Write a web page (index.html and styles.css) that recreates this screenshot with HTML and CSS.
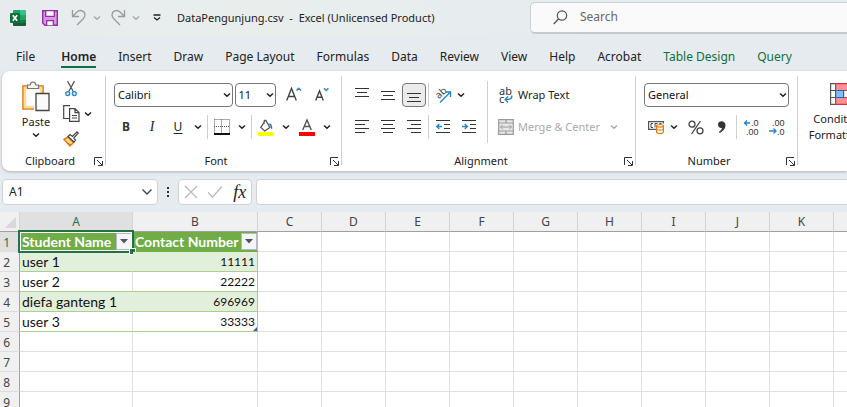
FILE: index.html
```html
<!DOCTYPE html>
<html lang="en">
<head>
<meta charset="utf-8">
<title>DataPengunjung.csv - Excel</title>
<link rel="stylesheet" href="styles.css">
</head>
<body>
<svg class="defs" aria-hidden="true">
  <symbol id="chev" viewBox="0 0 8 8"><path d="M1 2.500 4 5.300 7 2.500" fill="none" stroke="currentColor" stroke-width="1.500"/></symbol>
  <symbol id="launch" viewBox="0 0 9 9"><path d="M.5 8V.5H8M3 3l5 5M8.500 4v4.500H4" fill="none" stroke="#333"/></symbol>
</svg>

<header class="titlebar">
  <svg class="logo" width="16" height="16" viewBox="0 0 16 16" aria-hidden="true">
    <path d="M3 1a1 1 0 0 1 1-1h6v5H3z" fill="#21a366"/><path d="M10 0h5a1 1 0 0 1 1 1v4h-6z" fill="#33c481"/>
    <path d="M3 5h7v5H3z" fill="#107c41"/><path d="M10 5h6v5h-6z" fill="#21a366"/>
    <path d="M3 10h13v5a1 1 0 0 1-1 1H4a1 1 0 0 1-1-1z" fill="#185c37"/><path d="M10 10h6v3h-6z" fill="#107c41"/>
    <rect y="3" width="10" height="10" rx="1" fill="#0f7039"/>
    <path d="M2.800 5.200 7.200 10.800M7.200 5.200 2.800 10.800" stroke="#fff" stroke-width="1.700"/>
  </svg>
  <button class="qat save" aria-label="Save"><svg width="16" height="16" viewBox="0 0 16 16"><path d="M.7.700h14.600v14.600H3L.7 13z" fill="#d59ade" stroke="#962aa5" stroke-width="1.400"/><path d="M3.700.700h8.600v5.600H3.700zM4.700 15.300v-4.600h6.600v4.600" fill="#fff" stroke="#962aa5" stroke-width="1.300"/></svg></button>
  <span class="qat-split"><button class="qat" aria-label="Undo"><svg width="16" height="17" viewBox="0 0 16 17"><path d="M1.500 1v6.500H8M2 7 6 3c3-3 8-1 8 3 0 2-1 3-2 4l-6 6" fill="none" stroke="#999" stroke-width="1.300"/></svg></button><button class="drop" aria-label="Undo history"><svg width="8" height="8"><use href="#chev"/></svg></button></span>
  <span class="qat-split"><button class="qat" aria-label="Redo"><svg width="16" height="17" viewBox="0 0 16 17"><path d="M14.500 1v6.500H8M14 7l-4-4C7 0 2 2 2 6c0 2 1 3 2 4l6 6" fill="none" stroke="#999" stroke-width="1.300"/></svg></button><button class="drop" aria-label="Redo history"><svg width="8" height="8"><use href="#chev"/></svg></button></span>
  <button class="qat more" aria-label="Customize Quick Access Toolbar"><svg width="8" height="8" viewBox="0 0 8 8"><path d="M.5 1h7M1 3.500 4 6l3-2.500" fill="none" stroke="#222" stroke-width="1.300"/></svg></button>
  <h1 class="doc">DataPengunjung.csv&nbsp; -&nbsp; Excel (Unlicensed Product)</h1>
  <label class="search">
    <svg width="15" height="15" viewBox="0 0 15 15" aria-hidden="true"><circle cx="9" cy="5.500" r="4.700" fill="none" stroke="#555" stroke-width="1.200"/><path d="M5.500 9 .7 14" stroke="#555" stroke-width="1.300"/></svg>
    <input type="search" placeholder="Search" aria-label="Search">
  </label>
</header>

<nav class="tabs">
  <a href="#" class="file">File</a><a href="#" class="active">Home</a><a href="#">Insert</a><a href="#">Draw</a><a href="#">Page Layout</a><a href="#">Formulas</a><a href="#">Data</a><a href="#">Review</a><a href="#">View</a><a href="#">Help</a><a href="#">Acrobat</a><a href="#" class="ctx">Table Design</a><a href="#" class="ctx">Query</a>
</nav>

<main>
<section class="ribbon">
  <div class="group clipboard">
    <div class="body">
      <button class="paste">
        <svg width="28" height="32" viewBox="0 0 28 32" aria-hidden="true"><path d="M1 5h20v23H1z" fill="#fff" stroke="#e07b12" stroke-width="1.600"/><path d="M3 7h16v19H3z" fill="none" stroke="#fbdc96" stroke-width="2.400"/><path d="M5.500 7.500V4H8c1-4 5-4 6 0h2.500v3.500z" fill="#f6f6f6" stroke="#777" stroke-width="1.200"/><path d="M12 10.500h4v20h-4z" fill="#fff"/><path d="M14 12.500h13v17H14z" fill="#fafafa" stroke="#444" stroke-width="1.300"/></svg>
        <span>Paste</span>
        <svg width="8" height="8"><use href="#chev"/></svg>
      </button>
      <div class="clips">
        <div class="clip-row"><button class="ico" aria-label="Cut"><svg width="12" height="17" viewBox="0 0 12 17"><path d="m2.500 1 6 11M9.500 1l-6 11" stroke="#555" stroke-width="1.300"/><circle cx="2.700" cy="13.600" r="2" fill="#d8ecfa" stroke="#2487ce" stroke-width="1.300"/><circle cx="9.300" cy="13.600" r="2" fill="#d8ecfa" stroke="#2487ce" stroke-width="1.300"/></svg></button></div>
        <div class="clip-row"><button class="ico" aria-label="Copy"><svg width="17" height="17" viewBox="0 0 17 17"><path d="M6 13.500H.7V.7H7" fill="none" stroke="#444" stroke-width="1.200"/><path d="M6.600 3.600h5.400l4 4v8.700H6.600zM12 3.600v4h4M9 10.500h5M9 13h5" fill="none" stroke="#444" stroke-width="1.200"/></svg></button><button class="drop" aria-label="Copy options"><svg width="8" height="8"><use href="#chev"/></svg></button></div>
        <div class="clip-row"><button class="ico" aria-label="Format Painter"><svg width="16" height="16" viewBox="0 0 16 16"><path d="M1 8.500 5 6l5.500 5.500L7 15z" fill="#ffd98b" stroke="#e07b12" stroke-width="1.500"/><path d="M3 10.500 7 15l1.500-1.500" fill="#e07b12"/><path d="m5 5.500 2-2 2.500 2L14 .8 15.300 2 10.800 7l1.700 2-1.500 2z" fill="#fff" stroke="#444" stroke-width="1.200"/></svg></button></div>
      </div>
    </div>
    <footer><span>Clipboard</span><button class="launch" aria-label="Clipboard settings"><svg width="9" height="9"><use href="#launch"/></svg></button></footer>
  </div>

  <div class="group font">
    <div class="body stack">
      <div class="row tight">
        <span class="combo name"><select aria-label="Font"><option>Calibri</option></select><svg width="8" height="8"><use href="#chev"/></svg></span>
        <span class="combo size"><select aria-label="Font size"><option>11</option></select><svg width="8" height="8"><use href="#chev"/></svg></span>
        <button class="btn grow" aria-label="Increase font size"><svg width="16" height="16" viewBox="0 0 16 16"><path d="M.7 13.500 5.500 1.500l4.800 12M2.300 9.500h6.400" fill="none" stroke="#444" stroke-width="1.400"/><path d="m10.500 3.500 2.200-2.300L15 3.500" fill="none" stroke="#2487ce" stroke-width="1.400"/></svg></button>
        <button class="btn" aria-label="Decrease font size"><svg width="14" height="16" viewBox="0 0 14 16"><path d="M.7 13.500 4.500 4l3.800 9.500M2 10.300h5" fill="none" stroke="#444" stroke-width="1.400"/><path d="M9 1.200 11.200 3.500l2.200-2.300" fill="none" stroke="#2487ce" stroke-width="1.400"/></svg></button>
      </div>
      <div class="row styles">
        <button class="ico bold">B</button><button class="ico ital">I</button>
        <span class="split"><button class="ico under">U</button><button class="drop" aria-label="Underline options"><svg width="8" height="8"><use href="#chev"/></svg></button></span>
        <i class="sep"></i>
        <span class="split"><button class="ico" aria-label="Borders"><svg width="16" height="16" viewBox="0 0 16 16"><path d="M.5.500h15v14M.5.500v14M7.500.500v14M0 7.500h16" fill="none" stroke="#555" stroke-dasharray="1 1"/><path d="M0 14h16v2H0z" fill="#111"/></svg></button><button class="drop" aria-label="Border options"><svg width="8" height="8"><use href="#chev"/></svg></button></span>
        <i class="sep"></i>
        <span class="split"><button class="ico" aria-label="Fill color"><svg width="16" height="17" viewBox="0 0 16 17"><path d="M7 2 2.800 8.500l4 3.500 5-3.500-3-5.500C8 .5 6 .5 6 3v2" fill="#fff" stroke="#555" stroke-width="1.300"/><path d="M10.500 4.500c3-.5 4 2 3.700 6-1.500-.5-1.500-3-2-4z" fill="#2374b5"/><path d="M0 13h16v4H0z" fill="#ff0"/></svg></button><button class="drop" aria-label="Fill colors"><svg width="8" height="8"><use href="#chev"/></svg></button></span>
        <span class="split last"><button class="ico" aria-label="Font color"><svg width="16" height="17" viewBox="0 0 16 17"><path d="M3.700 11 8 1l4.300 10M5.200 7.500h5.600" fill="none" stroke="#555" stroke-width="1.400"/><path d="M0 13h16v4H0z" fill="#f00"/></svg></button><button class="drop" aria-label="Font colors"><svg width="8" height="8"><use href="#chev"/></svg></button></span>
      </div>
    </div>
    <footer><span>Font</span><button class="launch" aria-label="Font settings"><svg width="9" height="9"><use href="#launch"/></svg></button></footer>
  </div>

  <div class="group align">
    <div class="body">
      <div class="stack">
        <div class="row tight">
          <button class="btn" aria-label="Top align"><svg width="14" height="14" viewBox="0 0 14 14"><path d="M0 .500h14M2 4.500h10M0 8.500h14" stroke="#333"/></svg></button>
          <button class="btn" aria-label="Middle align"><svg width="14" height="14" viewBox="0 0 14 14"><path d="M0 3.500h14M2 7.500h10M0 11.500h14" stroke="#333"/></svg></button>
          <button class="btn on" aria-label="Bottom align"><svg width="14" height="14" viewBox="0 0 14 14"><path d="M0 5.500h14M2 9.500h10M0 13.500h14" stroke="#333"/></svg></button>
          <i class="sep"></i>
          <span class="split flush"><button class="btn" aria-label="Orientation"><svg width="18" height="18" viewBox="0 0 18 18"><text x="2" y="12" transform="rotate(-42 5 9)" font-size="10" fill="#444">ab</text><path d="M6 16.500 16 6.500M11.500 6h5v5" fill="none" stroke="#2487ce" stroke-width="1.400"/></svg></button><button class="drop" aria-label="Orientation options"><svg width="8" height="8"><use href="#chev"/></svg></button></span>
        </div>
        <div class="row tight">
          <button class="btn" aria-label="Align left"><svg width="14" height="14" viewBox="0 0 14 14"><path d="M0 .500h14M0 4.500h10M0 8.500h14M0 12.500h10" stroke="#333"/></svg></button>
          <button class="btn" aria-label="Center"><svg width="14" height="14" viewBox="0 0 14 14"><path d="M0 .500h14M2 4.500h10M0 8.500h14M2 12.500h10" stroke="#333"/></svg></button>
          <button class="btn" aria-label="Align right"><svg width="14" height="14" viewBox="0 0 14 14"><path d="M0 .500h14M4 4.500h10M0 8.500h14M4 12.500h10" stroke="#333"/></svg></button>
          <i class="sep"></i>
          <button class="btn" aria-label="Decrease indent"><svg width="14" height="14" viewBox="0 0 14 14"><path d="M0 .500h14M8 4.500h6M8 8.500h6M0 12.500h14" stroke="#333"/><path d="M6 6.500H.8M3.300 4 .8 6.500 3.300 9" fill="none" stroke="#2487ce" stroke-width="1.400"/></svg></button>
          <button class="btn" aria-label="Increase indent"><svg width="14" height="14" viewBox="0 0 14 14"><path d="M0 .500h14M8 4.500h6M8 8.500h6M0 12.500h14" stroke="#333"/><path d="M0 6.500h5.200M2.800 4l2.500 2.500L2.800 9" fill="none" stroke="#2487ce" stroke-width="1.400"/></svg></button>
        </div>
      </div>
      <i class="sep tall"></i>
      <div class="stack wide">
        <button class="text"><svg width="16" height="18" viewBox="0 0 16 18" aria-hidden="true"><text x="1" y="9" font-size="11" fill="#333">ab</text><text x="1" y="17" font-size="11" fill="#333">c</text><path d="M13.500 9.500c1 3-1 4-6 4M10 10.500l-2.800 3 2.800 3" fill="none" stroke="#2487ce" stroke-width="1.500"/></svg><span>Wrap Text</span></button>
        <button class="text off" disabled><svg width="16" height="16" viewBox="0 0 16 16" aria-hidden="true"><path d="M.7.700h14.600v14.600H.7zM.7 4h14.600M.7 12h14.600M8 .7V4M8 12v3.300" fill="#e8e8e8" stroke="#999" stroke-width="1.200"/><path d="M2.500 8h11M4.700 5.800 2.500 8l2.200 2.200M11.300 5.800 13.500 8l-2.200 2.200" fill="none" stroke="#999"/></svg><span>Merge &amp; Center</span><svg class="end" width="8" height="8"><use href="#chev"/></svg></button>
      </div>
    </div>
    <footer><span>Alignment</span><button class="launch" aria-label="Alignment settings"><svg width="9" height="9"><use href="#launch"/></svg></button></footer>
  </div>

  <div class="group number">
    <div class="body stack">
      <div class="row"><span class="combo full"><select aria-label="Number format"><option>General</option></select><svg width="8" height="8"><use href="#chev"/></svg></span></div>
      <div class="row tight">
        <span class="split flush"><button class="btn" aria-label="Accounting format"><svg width="16" height="14" viewBox="0 0 16 14"><path d="M8 9.400H.6V1.600h14.800v2" fill="#fff" stroke="#555" stroke-width="1.200"/><path d="M5 3.500H3v4h2M7 7.500v-4h2.500M11.500 4.500v-1h2" fill="none" stroke="#444"/><path d="M8.600 6v6c0 2 6.800 2 6.800 0V6z" fill="#fff" stroke="#e07b12" stroke-width="1.200"/><ellipse cx="12" cy="5.800" rx="3.400" ry="1.300" fill="#fff" stroke="#e07b12" stroke-width="1.200"/><path d="M8.600 9c1 1.500 5.800 1.500 6.800 0" fill="none" stroke="#e07b12" stroke-width="1.200"/></svg></button><button class="drop" aria-label="Accounting options"><svg width="8" height="8"><use href="#chev"/></svg></button></span>
        <button class="btn pct" aria-label="Percent style"><svg width="16" height="15" viewBox="0 0 16 15"><circle cx="4" cy="4.200" r="3" fill="none" stroke="#444" stroke-width="1.300"/><circle cx="12" cy="10.800" r="3" fill="none" stroke="#444" stroke-width="1.300"/><path d="M12.500 1 3.500 14" stroke="#444" stroke-width="1.300"/></svg></button>
        <button class="btn" aria-label="Comma style"><svg width="10" height="14" viewBox="0 0 10 14"><path d="M1 4.500C1 0 8.500 0 8.500 5c0 4-3 6.500-6 8l-.7-1c2-1.200 3-2.500 3.200-4C3 8.500 1 7 1 4.500z" fill="#333"/></svg></button>
        <i class="sep"></i>
        <button class="btn" aria-label="Increase decimal"><svg class="dec" width="17" height="18" viewBox="0 0 17 18"><text x="8" y="8">.0</text><text x="3" y="17">.00</text><path d="M7 5H1.500M4 2.500 1.500 5 4 7.500" fill="none" stroke="#2487ce" stroke-width="1.400"/></svg></button>
        <button class="btn" aria-label="Decrease decimal"><svg class="dec" width="17" height="18" viewBox="0 0 17 18"><text x="3" y="8">.00</text><text x="8" y="17">.0</text><path d="M0 13h7M4.500 10.500 7 13l-2.500 2.500" fill="none" stroke="#2487ce" stroke-width="1.400"/></svg></button>
      </div>
    </div>
    <footer><span>Number</span><button class="launch" aria-label="Number settings"><svg width="9" height="9"><use href="#launch"/></svg></button></footer>
  </div>

  <div class="group cond">
    <div class="body">
      <button class="big"><svg width="26" height="22" viewBox="0 0 26 22" aria-hidden="true"><path d="M.6.600h24.800v20.800H.6zM.6 7.500h24.800M.6 14.500h24.800" fill="#fff" stroke="#555" stroke-width="1.200"/><path d="M5.600.600h13v6.900h-13zM5.600 14.500h13v6.900h-13z" fill="#fd8f96" stroke="#d13438" stroke-width="1.200"/><path d="M5.600 7.500h8v7h-8z" fill="#83beec" stroke="#0f6cbd" stroke-width="1.200"/></svg><span>Conditional<br>Formatting <svg class="inline" width="8" height="8"><use href="#chev"/></svg></span></button>
    </div>
  </div>
</section>

<section class="formula">
  <div class="namebox"><input value="A1" aria-label="Name box"><button aria-label="Names"><svg width="12" height="8" viewBox="0 0 12 8"><path d="m1.500 1.500 4.500 4.500 4.500-4.500" fill="none" stroke="#444" stroke-width="1.400"/></svg></button></div>
  <svg class="grip" width="4" height="14" viewBox="0 0 4 14" aria-hidden="true"><path d="M1 2h2v2H1zM1 6h2v2H1zM1 10h2v2H1z" fill="#333"/></svg>
  <div class="fx">
    <button aria-label="Cancel"><svg width="14" height="14" viewBox="0 0 14 14"><path d="m1 1 12 12M13 1 1 13" stroke="#bbb" stroke-width="1.300"/></svg></button>
    <button aria-label="Enter"><svg width="16" height="14" viewBox="0 0 16 14"><path d="m1 7.500 4.500 4.500L15 1.500" fill="none" stroke="#bbb" stroke-width="1.300"/></svg></button>
    <button class="fn">fx</button>
  </div>
  <input class="entry" aria-label="Formula bar">
</section>

<section class="sheet">
<table>
  <colgroup><col class="c-no"><col class="c-a"><col class="c-b"><col span="14" class="c-n"></colgroup>
  <thead><tr><th class="corner"><svg width="11" height="11" viewBox="0 0 11 11"><path d="M11 0v11H0z" fill="#d8d8d8"/></svg></th><th class="sel">A</th><th>B</th><th>C</th><th>D</th><th>E</th><th>F</th><th>G</th><th>H</th><th>I</th><th>J</th><th>K</th><th>L</th><th>M</th><th>N</th><th>O</th><th>P</th></tr></thead>
  <tbody>
  <tr class="head"><th class="sel">1</th><td class="current"><div><span>Student Name</span><button aria-label="Filter Student Name"><svg width="8" height="5" viewBox="0 0 8 5"><path d="M0 0h8L4 4.500z" fill="#555"/></svg></button></div></td><td><div><span>Contact Number</span><button aria-label="Filter Contact Number"><svg width="8" height="5" viewBox="0 0 8 5"><path d="M0 0h8L4 4.500z" fill="#555"/></svg></button></div></td><td></td><td></td><td></td><td></td><td></td><td></td><td></td><td></td><td></td><td></td><td></td><td></td><td></td><td></td></tr>
  <tr class="data band"><th>2</th><td>user 1</td><td>11111</td><td></td><td></td><td></td><td></td><td></td><td></td><td></td><td></td><td></td><td></td><td></td><td></td><td></td><td></td></tr>
  <tr class="data"><th>3</th><td>user 2</td><td>22222</td><td></td><td></td><td></td><td></td><td></td><td></td><td></td><td></td><td></td><td></td><td></td><td></td><td></td><td></td></tr>
  <tr class="data band"><th>4</th><td>diefa ganteng 1</td><td>696969</td><td></td><td></td><td></td><td></td><td></td><td></td><td></td><td></td><td></td><td></td><td></td><td></td><td></td><td></td></tr>
  <tr class="data end"><th>5</th><td>user 3</td><td>33333</td><td></td><td></td><td></td><td></td><td></td><td></td><td></td><td></td><td></td><td></td><td></td><td></td><td></td><td></td></tr>
  <tr><th>6</th><td></td><td></td><td></td><td></td><td></td><td></td><td></td><td></td><td></td><td></td><td></td><td></td><td></td><td></td><td></td><td></td></tr>
  <tr><th>7</th><td></td><td></td><td></td><td></td><td></td><td></td><td></td><td></td><td></td><td></td><td></td><td></td><td></td><td></td><td></td><td></td></tr>
  <tr><th>8</th><td></td><td></td><td></td><td></td><td></td><td></td><td></td><td></td><td></td><td></td><td></td><td></td><td></td><td></td><td></td><td></td></tr>
  <tr><th>9</th><td></td><td></td><td></td><td></td><td></td><td></td><td></td><td></td><td></td><td></td><td></td><td></td><td></td><td></td><td></td><td></td></tr>
  </tbody>
</table>
</section>
</main>
</body>
</html>
```
FILE: styles.css
```css
* { box-sizing: border-box; }
body {
  margin: 0;
  height: 100vh;
  overflow: hidden;
  background: #e6ebef;
  color: #222;
  font: 12px/16px "Noto Sans", sans-serif;
  display: flex;
  flex-direction: column;
}
main { flex: 1; min-height: 0; display: flex; flex-direction: column; }
button, input, select { font: inherit; color: inherit; }
button { border: 0; background: none; padding: 0; display: flex; align-items: center; justify-content: center; flex: none; }
svg { flex: none; display: block; overflow: visible; }
.defs { position: absolute; width: 0; height: 0; }
.inline { display: inline-block; vertical-align: middle; }

.titlebar { display: flex; align-items: center; height: 35px; flex: none; padding-left: 10px; background: linear-gradient(90deg, #e7ebee, #e9eeed 30%, #e6ebef 70%); }
.save { margin-left: 16px; }
.qat-split { display: flex; align-items: center; margin-left: 13px; color: #aaa; }
.qat-split .drop { width: 12px; margin-left: 4px; }
.qat-split + .qat-split { margin-left: 7px; }
.more { margin-left: 11px; }
.doc { margin: 0 0 0 16px; font-size: 11px; line-height: 16px; font-weight: 400; white-space: nowrap; width: 353px; flex: none; }
.search { flex: 1; display: flex; align-items: center; gap: 12px; height: 32px; padding-left: 22px; background: #fafafa; border: 1px solid #ccd0d3; border-bottom: 2px solid #c6c9cc; border-right: 0; border-radius: 5px 0 0 5px; color: #666; min-width: 0; }
.search input { border: 0; outline: 0; background: none; padding: 0; min-width: 0; flex: 1; }
.search input::placeholder { color: #666; opacity: 1; }

.tabs { display: flex; gap: 22px; height: 36px; flex: none; padding: 12px 0 0 16px; white-space: nowrap; }
.tabs a { color: #222; text-decoration: none; height: 21px; line-height: 20px; }
.tabs .file { margin-right: 4px; }
.tabs .active { font-weight: 600; border-bottom: 2px solid #0f703b; }
.tabs .ctx { color: #0f703b; }

.ribbon { display: flex; flex: none; height: 100px; margin-left: 2px; background: #fff; border-radius: 8px 0 0 8px; box-shadow: 0 1px 3px #aab0b5; overflow: hidden; }
.group { display: flex; flex-direction: column; justify-content: space-between; flex: none; position: relative; padding: 10px 8px 0; }
.group::after { content: ""; position: absolute; right: 0; top: 5px; bottom: 6px; width: 1px; background: #cfcfcf; }
.clipboard { width: 104px; }
.font { width: 236px; }
.align { width: 294px; }
.number { width: 162px; }
.cond { width: 90px; }
.body { display: flex; }
.stack { display: flex; flex-direction: column; gap: 4px; }
.row { display: flex; align-items: center; height: 28px; }
.tight { gap: 2px; }
footer { display: flex; align-items: center; height: 20px; text-align: center; font-size: 11px; margin-right: -8px; }
.font footer, .align footer, .number footer { margin-left: -8px; }
footer span { flex: 1; }
.launch { width: 16px; height: 16px; }

.paste { flex-direction: column; width: 52px; height: 64px; justify-content: flex-start; gap: 1px; }
.paste span { font-size: 11px; line-height: 16px; }
.clips { display: flex; flex-direction: column; margin-top: -5px; }
.clip-row { display: flex; align-items: center; gap: 2px; height: 25px; }
.ico { width: 18px; height: 24px; }
.btn { width: 24px; height: 24px; }
.drop { width: 12px; height: 24px; }
.on { background: #ebebeb; border: 1px solid #777; border-radius: 4px; }
.split { display: flex; gap: 4px; }
.flush { gap: 0; }
.sep { width: 1px; height: 24px; background: #cfcfcf; flex: none; }
.tall { height: 62px; margin: 0 8px 0 6px; }
.styles { padding-left: 3px; }
.styles .drop { width: 14px; }
.styles .ital { margin: 0 8px; }
.styles .sep { margin: 0 5px 0 2px; }
.styles .last { margin-left: 5px; }
.bold { font-weight: 700; color: #333; }
.ital { font: italic 14px "Liberation Serif", serif; }
.under { text-decoration: underline; text-underline-offset: 2px; }
.grow { margin-left: 4px; margin-right: 2px; }

.combo { position: relative; height: 24px; display: block; }
.combo select { width: 100%; height: 24px; appearance: none; border: 1px solid #767676; border-radius: 4px; background: #fff; padding: 0 3px; font-size: 11px; color: #111; }
.combo svg { position: absolute; right: 2px; top: 8px; pointer-events: none; }
.name { width: 123px; }
.size { width: 43px; }
.full { width: 145px; }

.text { height: 28px; gap: 4px; justify-content: flex-start; font-size: 11px; padding-left: 2px; white-space: nowrap; }
.off { color: #aaa; }
.end { margin-left: 6px; }
.pct { margin-left: 2px; }
.dec text { font: 9px "Liberation Sans", sans-serif; fill: #333; }
.big { flex-direction: column; gap: 6px; width: 74px; padding-top: 2px; }
.big span { font-size: 11px; white-space: nowrap; }

.formula { display: flex; flex: none; height: 26px; margin: 8px 0 7px 2px; }
.namebox, .fx, .entry { background: #fff; border: 1px solid #d0d3d6; border-radius: 4px; height: 26px; }
.namebox { width: 156px; display: flex; }
.namebox input { border: 0; background: none; outline: 0; padding: 0 6px; flex: 1; min-width: 0; }
.namebox button { width: 20px; }
.grip { margin: 6px 8px; }
.fx { width: 74px; display: flex; justify-content: space-around; }
.fn { font: italic 18px/22px "Liberation Serif", serif; color: #222; }
.entry { flex: 1; margin-left: 4px; border-right: 0; border-radius: 4px 0 0 4px; outline: 0; min-width: 0; }

.sheet { flex: 1; overflow: hidden; background: #fff; }
table { border-collapse: separate; border-spacing: 0; table-layout: fixed; width: 1154px; }
.c-no { width: 20px; }
.c-a { width: 113px; }
.c-b { width: 125px; }
.c-n { width: 64px; }
th { height: 20px; padding: 0; font-weight: 400; background: #f0f0f0; color: #444; }
tbody th { border-right: 1px solid #a0a0a0; border-bottom: 1px solid #ddd; line-height: 16px; padding: 2px 9px 0 0; text-align: right; }
thead th { border-right: 1px solid #d4d4d4; border-bottom: 1px solid #a0a0a0; }
.corner svg { margin: 2px 0 0 5px; }
th.sel { background: #e0e0e0; color: #217346; }
td { height: 20px; padding: 0 2px; border-right: 1px solid #e0e0e0; border-bottom: 1px solid #e0e0e0; font: 14px/19px Lato, sans-serif; color: #111; white-space: nowrap; }
.data td:nth-child(2), .data td:nth-child(3) { border-bottom-color: #a9d08e; }
.data td:nth-child(3) { text-align: right; font-size: 12px; border-right-color: #a9d08e; position: relative; }
.band td:nth-child(2), .band td:nth-child(3) { background: #e2efda; }
.band td:nth-child(2) { border-right-color: #e2efda; }
.end td:nth-child(3)::after { content: ""; position: absolute; right: 0; bottom: 0; border: 2px solid #3f57b5; border-top-color: transparent; border-left-color: transparent; }
.head td:nth-child(2), .head td:nth-child(3) { background: #70ad47; border-color: #70ad47; color: #fff; font-weight: 700; }
.head td:nth-child(3) { border-right-color: #a9d08e; }
.head div { display: flex; align-items: center; justify-content: space-between; height: 19px; }
.head button { width: 16px; height: 17px; background: #f3f5f9; border: 1px solid #b4b9c5; margin-right: -2px; }
.current { position: relative; }
.current::before { content: ""; position: absolute; inset: -2px; border: 2px solid #217346; box-shadow: inset 0 0 0 1px #fff; pointer-events: none; }
.current::after { content: ""; position: absolute; right: -3px; bottom: -3px; width: 5px; height: 5px; background: #217346; outline: 1px solid #fff; }
```
